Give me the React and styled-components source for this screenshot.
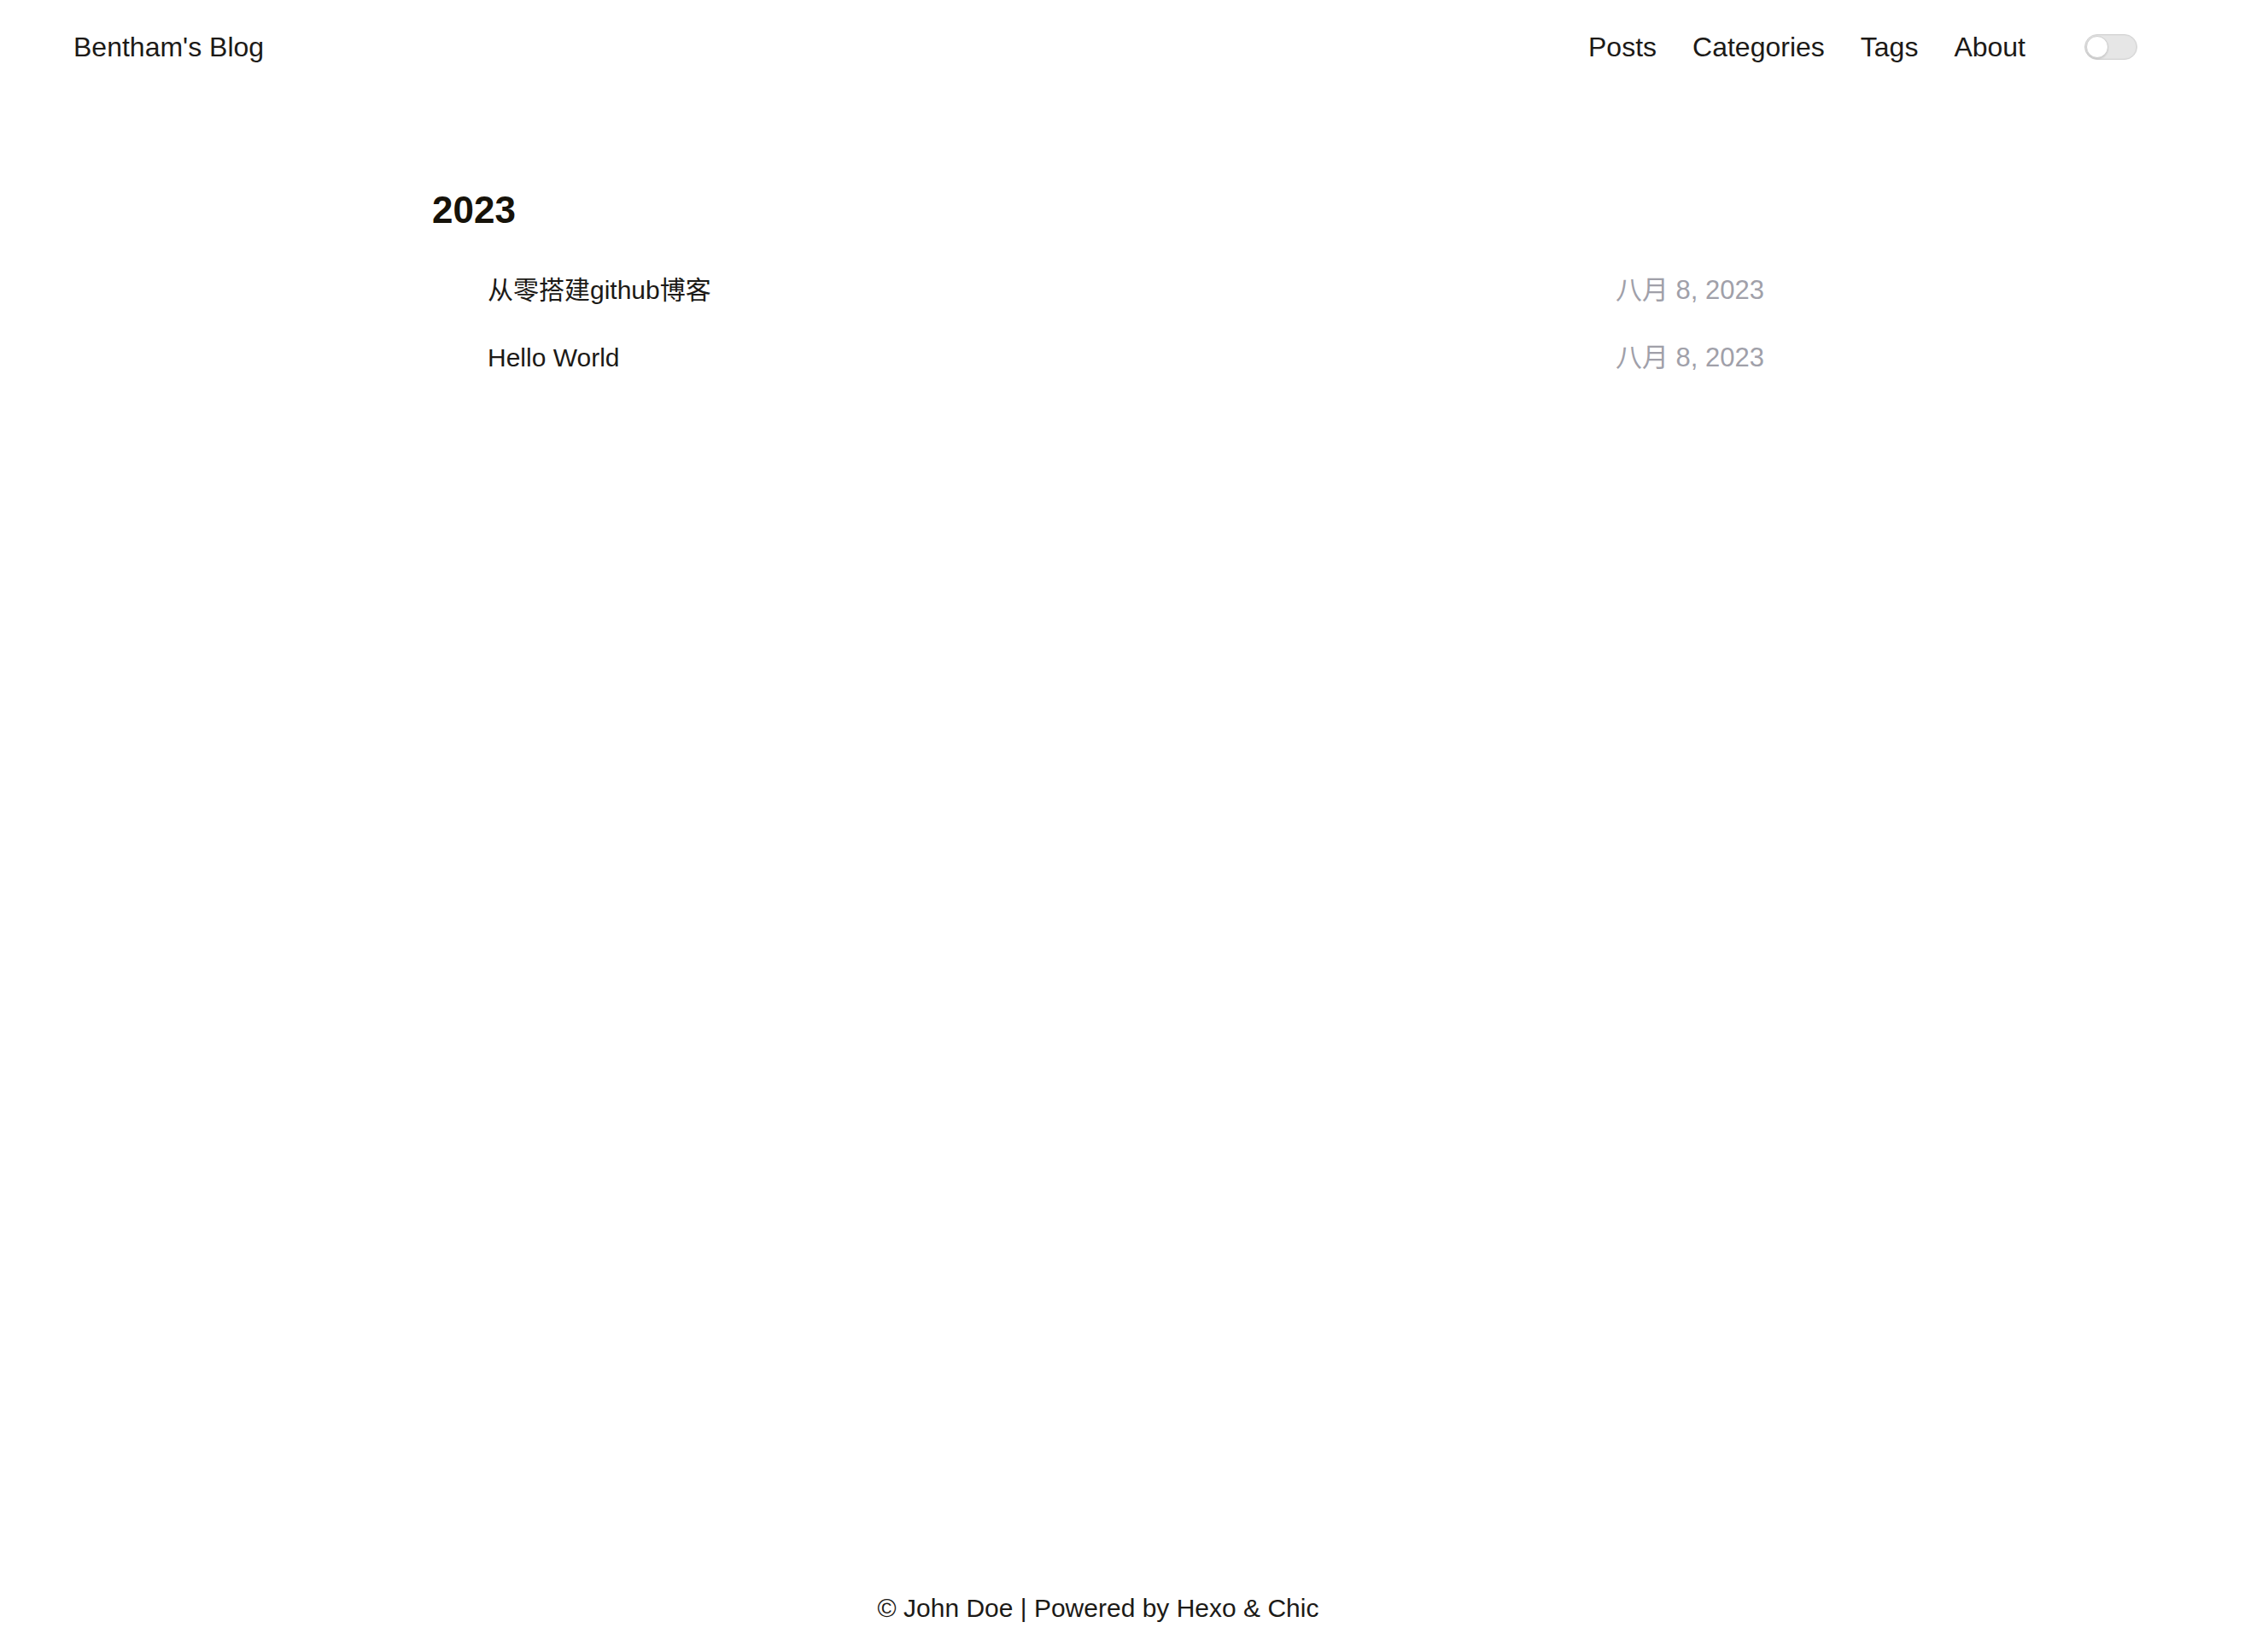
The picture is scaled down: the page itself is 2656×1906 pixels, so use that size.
import React from 'react';
import styled, { createGlobalStyle } from 'styled-components';

const GlobalStyle = createGlobalStyle`
  html, body {
    margin: 0;
    padding: 0;
    background: #fff;
  }
  body {
    font-family: "Liberation Sans", Arial, "Noto Sans CJK SC", sans-serif;
    color: #161209;
  }
  a { color: inherit; text-decoration: none; }
`;

const Page = styled.div`
  min-height: 100vh;
  display: flex;
  flex-direction: column;
`;

const Header = styled.header`
  display: flex;
  align-items: center;
  justify-content: space-between;
  height: 110px;
  padding: 0 153px 0 86px;
  box-sizing: border-box;
`;

const Brand = styled.a`
  font-size: 32px;
  line-height: 48px;
  color: #1c1a17;
`;

const Nav = styled.nav`
  display: flex;
  align-items: center;
`;

const NavLinks = styled.ul`
  display: flex;
  gap: 42px;
  list-style: none;
  margin: 0 69px 0 0;
  padding: 0;
`;

const NavLink = styled.a`
  font-size: 32px;
  line-height: 48px;
  color: #1c1a17;
`;

const Toggle = styled.span`
  position: relative;
  display: inline-block;
  width: 62px;
  height: 30px;
  box-sizing: border-box;
  border-radius: 15px;
  background: #e6e6e6;
  border: 1px solid #d3d3d3;
  box-shadow: inset 0 0 0 1px #e0e0e0;
`;

const Knob = styled.span`
  position: absolute;
  top: 1px;
  left: 1px;
  width: 26px;
  height: 26px;
  border-radius: 50%;
  background: #fff;
  border: 1px solid #cfcfcf;
  box-sizing: border-box;
  box-shadow: 0 1px 2px rgba(0, 0, 0, 0.12);
`;

const Main = styled.main`
  flex: 1;
  padding: 0 506px;
`;

const Year = styled.h2`
  margin: 104px 0 22px;
  font-size: 44px;
  line-height: 64px;
  font-weight: 700;
  color: #161209;
`;

const PostList = styled.ul`
  list-style: none;
  margin: 0;
  padding: 0 84px 0 65px;
`;

const PostItem = styled.li`
  display: flex;
  justify-content: space-between;
  align-items: center;
  padding: 17px 0;
  font-size: 30px;
  line-height: 45px;
`;

const PostTitle = styled.a`
  color: #1c1a17;
`;

const PostDate = styled.span`
  color: #a0a0a9;
  font-size: 31px;
`;

const Footer = styled.footer`
  text-align: center;
  padding-right: 84px;
  font-size: 30px;
  line-height: 46px;
  color: #1c1a17;
`;

const posts = [
  { title: '从零搭建github博客', date: '八月 8, 2023' },
  { title: 'Hello World', date: '八月 8, 2023' },
];

export default function App() {
  return (
    <Page>
      <GlobalStyle />
      <Header>
        <Brand href="#">Bentham's Blog</Brand>
        <Nav>
          <NavLinks>
            {['Posts', 'Categories', 'Tags', 'About'].map((l) => (
              <li key={l}>
                <NavLink href="#">{l}</NavLink>
              </li>
            ))}
          </NavLinks>
          <Toggle>
            <Knob />
          </Toggle>
        </Nav>
      </Header>

      <Main>
        <Year>2023</Year>
        <PostList>
          {posts.map((p) => (
            <PostItem key={p.title}>
              <PostTitle href="#">{p.title}</PostTitle>
              <PostDate>{p.date}</PostDate>
            </PostItem>
          ))}
        </PostList>
      </Main>

      <Footer>© John Doe | Powered by Hexo &amp; Chic</Footer>
    </Page>
  );
}
